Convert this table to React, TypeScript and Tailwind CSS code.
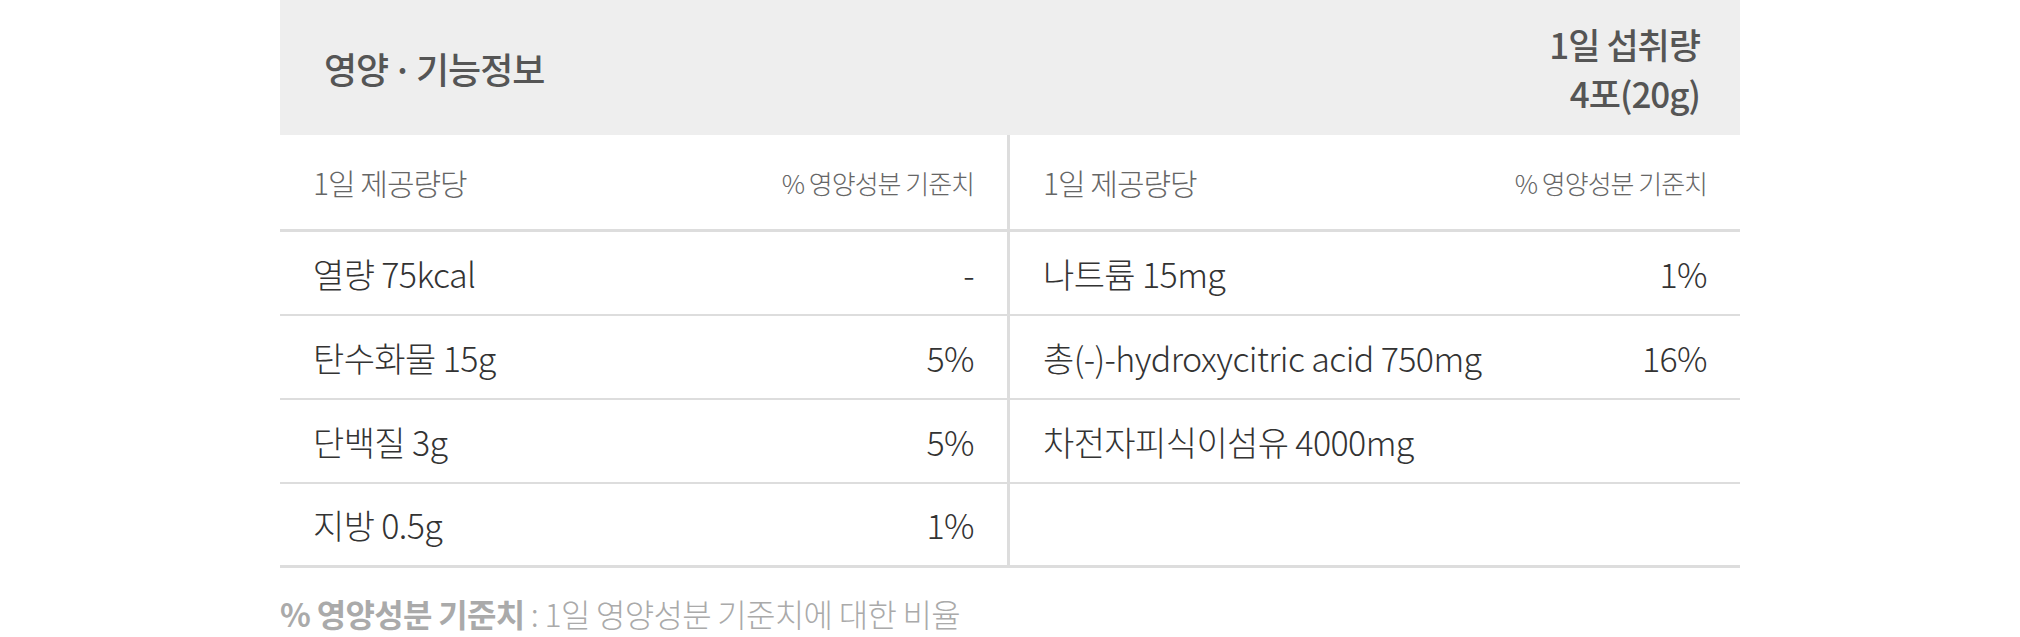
import React from "react";

type Row = { name: string; pct: string };

const left: Row[] = [
  { name: "열량 75kcal", pct: "-" },
  { name: "탄수화물 15g", pct: "5%" },
  { name: "단백질 3g", pct: "5%" },
  { name: "지방 0.5g", pct: "1%" },
];

const right: Row[] = [
  { name: "나트륨 15mg", pct: "1%" },
  { name: "총(-)-hydroxycitric acid 750mg", pct: "16%" },
  { name: "차전자피식이섬유 4000mg", pct: "" },
  { name: "", pct: "" },
];

const font = "font-['Noto_Sans_CJK_KR','Noto_Sans',sans-serif]";

function Cell({ row, first }: { row: Row; first?: boolean }) {
  return (
    <div
      className={`flex h-full items-center justify-between px-[33px] text-[34px] font-light text-[#333] tracking-[-0.6px] ${
        first ? "border-r-[3px] border-[#dddddd]" : ""
      }`}
    >
      <span>{row.name}</span>
      <span>{row.pct}</span>
    </div>
  );
}

export default function App() {
  return (
    <div className={`min-h-screen bg-white ${font}`}>
      <div className="mx-auto w-[1460px]">
        {/* head */}
        <div className="flex h-[135px] items-center justify-between bg-[#eeeeee] pl-[44px] pr-[40px] text-[#555]">
          <h2 className="text-[36px] font-medium tracking-[-1px]">
            영양<span className="mx-[4px]">·</span>기능정보
          </h2>
          <div className="text-right text-[35px] font-medium leading-[49px] tracking-[-1px]">
            <div>1일 섭취량</div>
            <div>4포(20g)</div>
          </div>
        </div>

        {/* column labels */}
        <div className="grid h-[97px] grid-cols-2 border-b-[3px] border-[#dddddd]">
          {[0, 1].map((i) => (
            <div
              key={i}
              className={`flex items-center justify-between px-[33px] font-light text-[#666] tracking-[-1px] ${
                i === 0 ? "border-r-[3px] border-[#dddddd]" : ""
              }`}
            >
              <span className="text-[30px]">1일 제공량당</span>
              <span className="text-[26px]">% 영양성분 기준치</span>
            </div>
          ))}
        </div>

        {/* rows */}
        {left.map((row, i) => (
          <div
            key={i}
            className={`grid h-[84px] grid-cols-2 border-[#dddddd] ${
              i === left.length - 1 ? "border-b-[3px]" : "border-b-2"
            }`}
          >
            <Cell row={row} first />
            <Cell row={right[i]} />
          </div>
        ))}

        <p className="mt-[24px] text-[32px] font-light leading-[42px] tracking-[-0.7px] text-[#aaaaaa]">
          <span className="font-bold">% 영양성분 기준치</span> : 1일 영양성분 기준치에 대한 비율
        </p>
      </div>
    </div>
  );
}
